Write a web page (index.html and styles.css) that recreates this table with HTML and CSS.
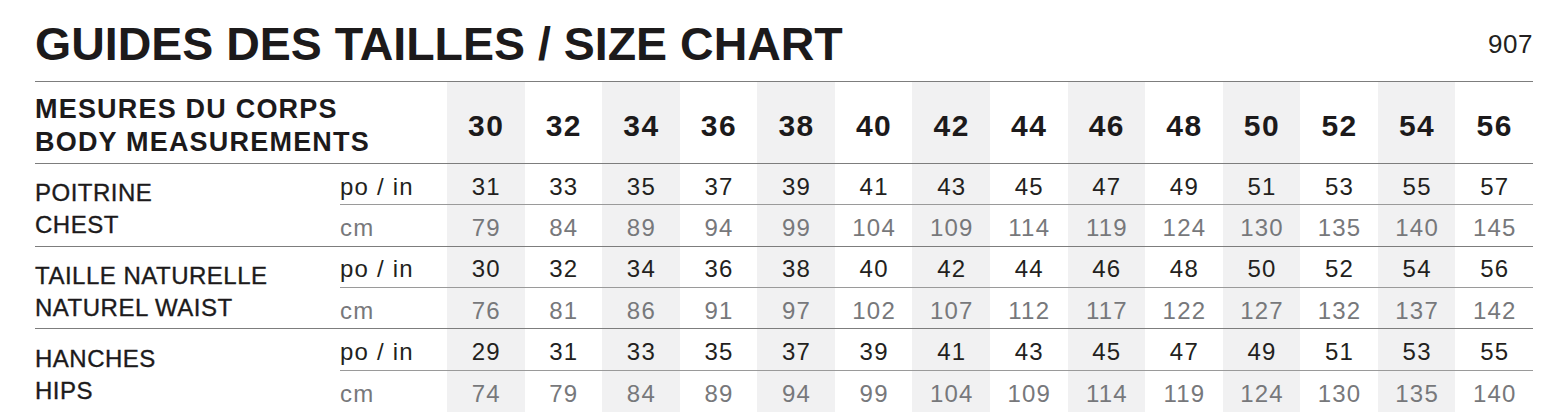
FILE: index.html
```html
<!DOCTYPE html>
<html lang="fr">
<head>
<meta charset="utf-8">
<title>Guides des tailles / Size chart 907</title>
<link rel="stylesheet" href="styles.css">
</head>
<body>
<div class="sheet">
  <header class="top">
    <h1 class="title">GUIDES DES TAILLES / SIZE CHART</h1>
    <span class="code">907</span>
  </header>
  <div class="chart">
    <div class="head-label">MESURES DU CORPS<br>BODY MEASUREMENTS</div>
    <div class="size">30</div><div class="size">32</div><div class="size">34</div><div class="size">36</div><div class="size">38</div><div class="size">40</div><div class="size">42</div><div class="size">44</div><div class="size">46</div><div class="size">48</div><div class="size">50</div><div class="size">52</div><div class="size">54</div><div class="size">56</div>

    <div class="label">POITRINE<br>CHEST</div>
    <div class="unit in sub">po / in</div>
    <div class="val in sub">31</div><div class="val in sub">33</div><div class="val in sub">35</div><div class="val in sub">37</div><div class="val in sub">39</div><div class="val in sub">41</div><div class="val in sub">43</div><div class="val in sub">45</div><div class="val in sub">47</div><div class="val in sub">49</div><div class="val in sub">51</div><div class="val in sub">53</div><div class="val in sub">55</div><div class="val in sub">57</div>
    <div class="unit cm">cm</div>
    <div class="val cm">79</div><div class="val cm">84</div><div class="val cm">89</div><div class="val cm">94</div><div class="val cm">99</div><div class="val cm">104</div><div class="val cm">109</div><div class="val cm">114</div><div class="val cm">119</div><div class="val cm">124</div><div class="val cm">130</div><div class="val cm">135</div><div class="val cm">140</div><div class="val cm">145</div>

    <div class="label">TAILLE NATURELLE<br>NATUREL WAIST</div>
    <div class="unit in sub">po / in</div>
    <div class="val in sub">30</div><div class="val in sub">32</div><div class="val in sub">34</div><div class="val in sub">36</div><div class="val in sub">38</div><div class="val in sub">40</div><div class="val in sub">42</div><div class="val in sub">44</div><div class="val in sub">46</div><div class="val in sub">48</div><div class="val in sub">50</div><div class="val in sub">52</div><div class="val in sub">54</div><div class="val in sub">56</div>
    <div class="unit cm">cm</div>
    <div class="val cm">76</div><div class="val cm">81</div><div class="val cm">86</div><div class="val cm">91</div><div class="val cm">97</div><div class="val cm">102</div><div class="val cm">107</div><div class="val cm">112</div><div class="val cm">117</div><div class="val cm">122</div><div class="val cm">127</div><div class="val cm">132</div><div class="val cm">137</div><div class="val cm">142</div>

    <div class="label last">HANCHES<br>HIPS</div>
    <div class="unit in sub">po / in</div>
    <div class="val in sub">29</div><div class="val in sub">31</div><div class="val in sub">33</div><div class="val in sub">35</div><div class="val in sub">37</div><div class="val in sub">39</div><div class="val in sub">41</div><div class="val in sub">43</div><div class="val in sub">45</div><div class="val in sub">47</div><div class="val in sub">49</div><div class="val in sub">51</div><div class="val in sub">53</div><div class="val in sub">55</div>
    <div class="unit cm last">cm</div>
    <div class="val cm last">74</div><div class="val cm last">79</div><div class="val cm last">84</div><div class="val cm last">89</div><div class="val cm last">94</div><div class="val cm last">99</div><div class="val cm last">104</div><div class="val cm last">109</div><div class="val cm last">114</div><div class="val cm last">119</div><div class="val cm last">124</div><div class="val cm last">130</div><div class="val cm last">135</div><div class="val cm last">140</div>
  </div>
</div>
</body>
</html>
```

FILE: styles.css
```css
* { box-sizing: border-box; }

html, body {
  margin: 0;
  padding: 0;
  background: #ffffff;
}

body {
  font-family: "Liberation Sans", Arial, Helvetica, sans-serif;
  color: #231f20;
}

.sheet {
  width: 1533px;
  padding-left: 35px;
}

.top {
  display: flex;
  justify-content: space-between;
  align-items: flex-start;
  height: 82px;
  border-bottom: 1px solid #7d7d7d;
}

.title {
  margin: 0;
  padding-top: 21px;
  font-size: 46.5px;
  line-height: 46px;
  font-weight: 700;
  color: #1c1a1b;
}

.code {
  padding-top: 31px;
  font-size: 26px;
  line-height: 26px;
  letter-spacing: 0.5px;
  color: #231f20;
}

.chart {
  display: grid;
  grid-template-columns: 305px 107px repeat(14, 1fr);
  grid-template-rows: 82px repeat(6, 41.33px);
  background-image: repeating-linear-gradient(90deg, #f1f1f2 0 77.571px, #ffffff 77.571px 155.143px);
  background-size: 1086px 100%;
  background-position: right top;
  background-repeat: no-repeat;
}

.head-label,
.size {
  border-bottom: 1px solid #7d7d7d;
  padding-top: 6px;
}

.head-label {
  grid-column: 1 / 3;
  display: flex;
  align-items: center;
  font-size: 27px;
  line-height: 33px;
  font-weight: 700;
  letter-spacing: 1.2px;
  color: #1c1a1b;
}

.size {
  display: flex;
  align-items: center;
  justify-content: center;
  font-size: 30px;
  font-weight: 700;
  letter-spacing: 1.5px;
  padding-left: 1px;
  color: #1c1a1b;
}

.label {
  grid-row: span 2;
  display: flex;
  align-items: center;
  padding-top: 9px;
  font-size: 24px;
  line-height: 32px;
  letter-spacing: 0.5px;
  color: #1c1a1b;
  -webkit-text-stroke: 0.35px #1c1a1b;
  border-bottom: 1px solid #7d7d7d;
}

.unit,
.val {
  display: flex;
  align-items: center;
  padding-top: 5px;
  font-size: 24px;
  letter-spacing: 1.2px;
}

.val {
  justify-content: center;
  padding-left: 1px;
}

.in { color: #231f20; }
.cm { color: #77787b; }

.sub { border-bottom: 1px solid #9a9a9a; }
.cm { border-bottom: 1px solid #7d7d7d; }

.last { border-bottom: none; }
```
